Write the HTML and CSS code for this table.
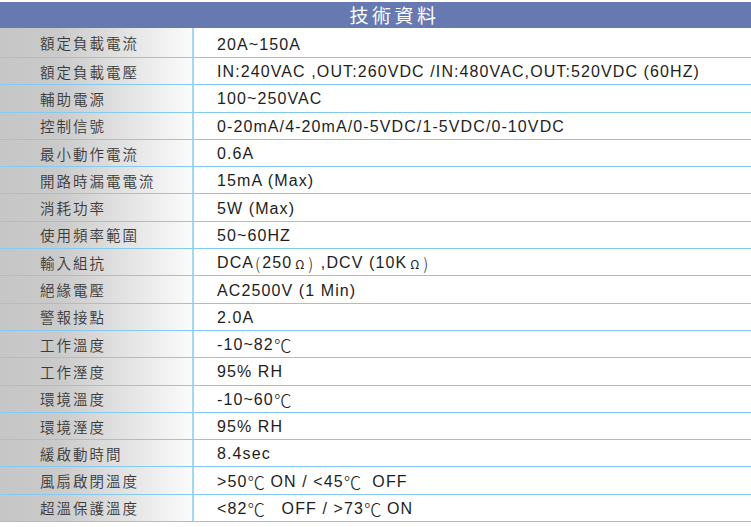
FILE: index.html
```html
<!DOCTYPE html>
<html lang="zh-Hant">
<head>
<meta charset="utf-8">
<link rel="stylesheet" href="styles.css">
</head>
<body>
<div class="spec">
  <div class="spec-head">技術資料</div>
  <div class="row first"><div class="label">額定負載電流</div><div class="value">20A~150A</div></div>
  <div class="row"><div class="label">額定負載電壓</div><div class="value">IN:240VAC ,OUT:260VDC /IN:480VAC,OUT:520VDC (60HZ)</div></div>
  <div class="row"><div class="label">輔助電源</div><div class="value">100~250VAC</div></div>
  <div class="row"><div class="label">控制信號</div><div class="value">0-20mA/4-20mA/0-5VDC/1-5VDC/0-10VDC</div></div>
  <div class="row"><div class="label">最小動作電流</div><div class="value">0.6A</div></div>
  <div class="row"><div class="label">開路時漏電電流</div><div class="value">15mA (Max)</div></div>
  <div class="row"><div class="label">消耗功率</div><div class="value">5W (Max)</div></div>
  <div class="row"><div class="label">使用頻率範圍</div><div class="value">50~60HZ</div></div>
  <div class="row"><div class="label">輸入組抗</div><div class="value">DCA<span class="cj">(</span>250<span class="om">Ω</span><span class="cj">)</span> ,DCV (10K<span class="om">Ω</span><span class="cj">)</span></div></div>
  <div class="row"><div class="label">絕緣電壓</div><div class="value">AC2500V (1 Min)</div></div>
  <div class="row"><div class="label">警報接點</div><div class="value">2.0A</div></div>
  <div class="row"><div class="label">工作溫度</div><div class="value">-10~82<span class="deg">℃</span></div></div>
  <div class="row"><div class="label">工作溼度</div><div class="value">95% RH</div></div>
  <div class="row"><div class="label">環境溫度</div><div class="value">-10~60<span class="deg">℃</span></div></div>
  <div class="row"><div class="label">環境溼度</div><div class="value">95% RH</div></div>
  <div class="row"><div class="label">緩啟動時間</div><div class="value">8.4sec</div></div>
  <div class="row"><div class="label">風扇啟閉溫度</div><div class="value">&gt;50<span class="deg">℃</span> ON / &lt;45<span class="deg">℃</span>&nbsp; OFF</div></div>
  <div class="row"><div class="label">超溫保護溫度</div><div class="value">&lt;82<span class="deg">℃</span>&nbsp;&nbsp; OFF / &gt;73<span class="deg">℃</span> ON</div></div>
</div>
</body>
</html>
```
FILE: styles.css
```css
html, body {
  margin: 0;
  padding: 0;
  background: #ffffff;
}
*, *::before, *::after {
  box-sizing: border-box;
}
.spec {
  width: 751px;
  padding-top: 2px;
}
.spec-head {
  height: 26px;
  background: #6679b1;
  color: #ffffff;
  font-family: "Noto Sans CJK TC", sans-serif;
  font-size: 19px;
  letter-spacing: 3.5px;
  line-height: 26px;
  text-align: center;
  padding-left: 38px;
}
.row {
  display: flex;
  height: 27.3px;
  border-bottom: 1px solid #86c9f1;
}
.row.first {
  height: 30px;
}
.label {
  width: 194px;
  flex: none;
  padding-left: 40px;
  display: flex;
  align-items: center;
  background: linear-gradient(to right, #c6c6c6 0%, #cacaca 30%, #fbfbfb 100%);
  border-right: 2px solid #a4d6f5;
  font-family: "Noto Sans CJK TC", sans-serif;
  font-size: 14.5px;
  font-weight: 350;
  letter-spacing: 2px;
  color: #3a3a3a;
}
.value {
  flex: 1;
  padding-left: 23px;
  padding-top: 2px;
  display: flex;
  align-items: center;
  font-family: "Liberation Sans", Arial, sans-serif;
  font-size: 16px;
  letter-spacing: 1.1px;
  color: #1e1e1e;
  white-space: pre;
}
.row.first .value {
  padding-top: 5px;
}
.cj {
  font-family: "Noto Sans CJK TC", sans-serif;
  font-size: 16px;
  font-weight: 300;
  letter-spacing: 1px;
  padding: 0 1px;
}
.om {
  font-family: "Noto Sans CJK TC", sans-serif;
  font-size: 12px;
  letter-spacing: 0;
  padding: 0 3px;
}
.deg {
  font-family: "Noto Sans CJK TC", sans-serif;
  font-size: 17.5px;
  font-weight: 300;
  letter-spacing: 0;
  line-height: 1;
}
```
